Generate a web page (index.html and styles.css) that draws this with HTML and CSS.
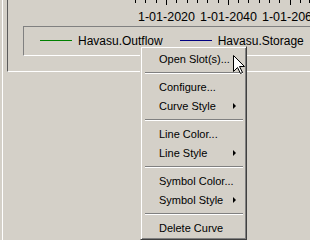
FILE: index.html
```html
<!DOCTYPE html>
<html>
	<head>
		<meta charset="utf-8">
		<link rel="stylesheet" href="styles.css">
	</head>
	<body>
		<div class="plot-window">
			<div class="plot-frame">
				<svg class="time-axis" width="302" height="26">
					<g class="ticks">
						<line x1="127.5" y1="0" x2="127.5" y2="3"/>
						<line x1="137.5" y1="0" x2="137.5" y2="3"/>
						<line x1="148.5" y1="0" x2="148.5" y2="3"/>
						<line x1="158.5" y1="0" x2="158.5" y2="5"/>
						<line x1="168.5" y1="0" x2="168.5" y2="3"/>
						<line x1="179.5" y1="0" x2="179.5" y2="3"/>
						<line x1="189.5" y1="0" x2="189.5" y2="3"/>
						<line x1="199.5" y1="0" x2="199.5" y2="3"/>
						<line x1="210.5" y1="0" x2="210.5" y2="3"/>
						<line x1="220.5" y1="0" x2="220.5" y2="5"/>
						<line x1="230.5" y1="0" x2="230.5" y2="3"/>
						<line x1="240.5" y1="0" x2="240.5" y2="3"/>
						<line x1="251.5" y1="0" x2="251.5" y2="3"/>
						<line x1="261.5" y1="0" x2="261.5" y2="3"/>
						<line x1="271.5" y1="0" x2="271.5" y2="3"/>
						<line x1="282.5" y1="0" x2="282.5" y2="5"/>
						<line x1="292.5" y1="0" x2="292.5" y2="3"/>
						<line x1="301.5" y1="0" x2="301.5" y2="3"/>
					</g>
					<text x="158.5" y="21">1-01-2020</text>
					<text x="220.5" y="21">1-01-2040</text>
					<text x="282.5" y="21">1-01-2060</text>
				</svg>

				<div class="legend">
					<span class="legend-swatch swatch-outflow"></span>
					<span class="legend-label">Havasu.Outflow</span>
					<span class="legend-swatch swatch-storage"></span>
					<span class="legend-label">Havasu.Storage</span>
				</div>
			</div>
		</div>

		<ul class="context-menu">
			<li class="menu-item">Open Slot(s)...</li>
			<li class="menu-sep"></li>
			<li class="menu-item">Configure...</li>
			<li class="menu-item">Curve Style<span class="submenu-arrow"></span></li>
			<li class="menu-sep"></li>
			<li class="menu-item">Line Color...</li>
			<li class="menu-item">Line Style<span class="submenu-arrow"></span></li>
			<li class="menu-sep"></li>
			<li class="menu-item">Symbol Color...</li>
			<li class="menu-item">Symbol Style<span class="submenu-arrow"></span></li>
			<li class="menu-sep"></li>
			<li class="menu-item">Delete Curve</li>
		</ul>

		<svg class="mouse-cursor" width="13" height="20">
			<path d="M0.5 0.5 L0.5 16.5 L4.5 12.5 L7.5 18.5 L9.5 17.5 L6.5 11.5 L11.5 11.5 Z"/>
		</svg>
	</body>
</html>
```

FILE: styles.css
```css
html, body{
	margin: 0;
	padding: 0;
}
body{
	position: relative;
	width: 310px;
	height: 240px;
	overflow: hidden;
	background: #d4d0c8;
	font-family: "Liberation Sans", Arial, sans-serif;
	color: #000000;
}

.plot-window{
	margin-left: 2px;
	height: 240px;
	border-left: 1px solid #ffffff;
}
.plot-frame{
	margin-left: 4px;
	height: 71px;
	border-left: 1px solid #5a5a5a;
	border-bottom: 1px solid #ffffff;
}

.time-axis{
	display: block;
}
.time-axis .ticks line{
	stroke: #000000;
	stroke-width: 1;
}
.time-axis text{
	font-family: "Liberation Sans", Arial, sans-serif;
	font-size: 12.5px;
	fill: #000000;
	text-anchor: middle;
}

.legend{
	display: flex;
	align-items: center;
	margin-left: 15px;
	height: 28px;
	padding-left: 16px;
	border-top: 1px solid #808080;
	border-left: 1px solid #808080;
	border-bottom: 1px solid #ffffff;
	font-size: 12px;
	white-space: nowrap;
	overflow: hidden;
}
.legend-swatch{
	flex-shrink: 0;
	align-self: flex-start;
	width: 32px;
	height: 1px;
	margin: 13px 6px 0 0;
}
.swatch-outflow{background: #008000;}
.swatch-storage{background: #000080;}
.legend-label{
	flex-shrink: 0;
	margin-right: 17px;
}

.context-menu{
	position: absolute;
	left: 140px;
	top: 46px;
	box-sizing: border-box;
	width: 107px;
	margin: 0;
	padding: 2px;
	list-style: none;
	background: #d4d0c8;
	border: 1px solid;
	border-color: #d4d0c8 #404040 #404040 #d4d0c8;
	box-shadow: inset 1px 1px 0 #ffffff, inset -1px -1px 0 #808080;
	font-size: 11px;
}
.menu-item{
	display: flex;
	align-items: center;
	justify-content: space-between;
	height: 19px;
	padding: 0 8px 0 16px;
	white-space: nowrap;
}
.submenu-arrow{
	width: 0;
	height: 0;
	border-left: 3px solid #000000;
	border-top: 3px solid transparent;
	border-bottom: 3px solid transparent;
}
.menu-sep{
	height: 9px;
	margin: 0 1px 0 2px;
	box-sizing: border-box;
	padding-top: 4px;
}
.menu-sep::before{
	content: "";
	display: block;
	border-top: 1px solid #808080;
	border-bottom: 1px solid #ffffff;
}

.mouse-cursor{
	position: absolute;
	left: 233px;
	top: 55px;
}
.mouse-cursor path{
	fill: #ffffff;
	stroke: #000000;
	stroke-width: 1;
	stroke-linejoin: miter;
}
```
